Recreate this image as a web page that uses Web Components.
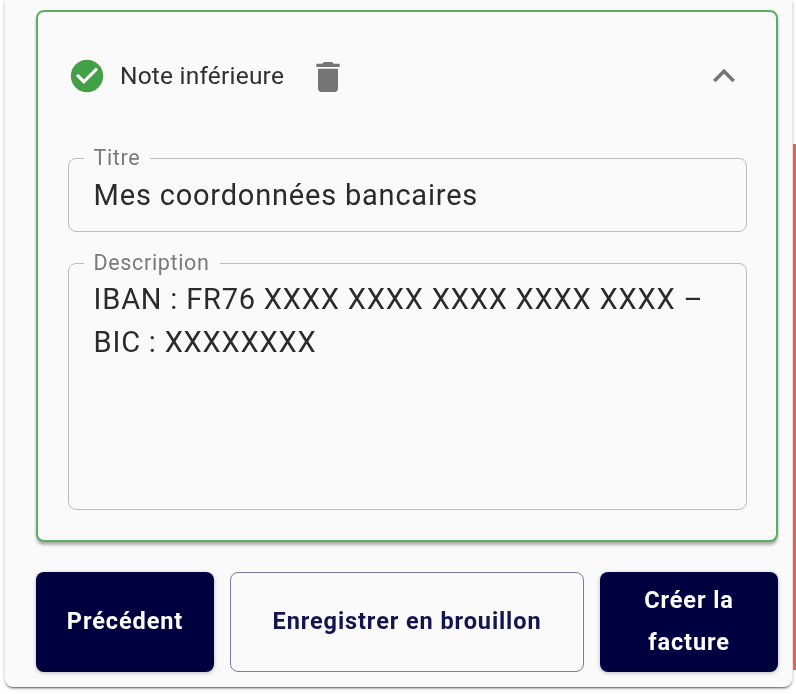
<!DOCTYPE html>
<html lang="fr"><head><meta charset="utf-8"><title>Note</title>
<style>
html,body{margin:0;padding:0;height:694px;overflow:hidden;background:#fff}
body{font-family:Roboto,"Liberation Sans",sans-serif;color:#262626}
</style></head><body>
<invoice-page>
  <note-card title-text="Note inférieure">
    <outlined-field label="Titre" style="--h:74px;--pt:16px">Mes coordonnées bancaires</outlined-field>
    <outlined-field label="Description" style="--h:247px;--pt:15px">IBAN : FR76 XXXX XXXX XXXX XXXX XXXX – BIC : XXXXXXXX</outlined-field>
  </note-card>
  <action-bar>
    <app-button variant="solid" style="width:178px">Précédent</app-button>
    <app-button variant="outline" style="width:354px">Enregistrer en brouillon</app-button>
    <app-button variant="solid" style="width:178px">Créer la facture</app-button>
  </action-bar>
</invoice-page>
<script>
function def(name,html){customElements.define(name,class extends HTMLElement{
  connectedCallback(){if(this.shadowRoot)return;const r=this.attachShadow({mode:'open'});r.innerHTML=typeof html==='function'?html(this):html;}
});}
def('invoice-page',`<style>
:host{display:block;box-sizing:border-box;width:796px;height:694px;position:relative;overflow:hidden;background:#fff;padding:0 0 7px 5px}
.paper{box-sizing:border-box;width:787px;height:687px;background:#fafafa;border-radius:0 0 8px 8px;padding:10px 14px 0 31px;
box-shadow:0 2px 2px -1px rgba(0,0,0,.55),0 1px 4px rgba(0,0,0,.22);display:flex;flex-direction:column;gap:30px;filter:blur(.35px)}
.red{position:absolute;right:0;top:144px;bottom:24px;width:3px;background:#e8604f}
</style><div class="paper"><slot></slot></div><div class="red"></div>`);
def('note-card',h=>`<style>
:host{display:block;flex:none;box-sizing:border-box;width:742px;height:532px;border:2px solid #5cae60;border-radius:8px;background:#fafafa;
box-shadow:0 3px 3px rgba(0,0,0,.3);padding:0 30px}
.head{display:flex;align-items:center;height:128px;margin-bottom:18px}
.check{width:38px;height:38px;flex:none}
.t{font-size:24.5px;letter-spacing:.2px;margin:-2px 0 0 14px;color:#303030}
.trash{width:40px;height:40px;margin:2px 0 0 23.5px;flex:none}
.chev{width:44px;height:44px;margin-left:auto;flex:none}
.body{display:flex;flex-direction:column;gap:31px}
</style>
<div class="head">
<svg class="check" viewBox="0 0 24 24"><circle cx="12" cy="12" r="10.2" fill="#43a047"/><path d="M10 17l-5-5 1.41-1.41L10 14.17l7.59-7.59L19 8z" fill="#fff"/></svg>
<span class="t">${h.getAttribute('title-text')}</span>
<svg class="trash" viewBox="0 0 24 24"><path fill="#757575" d="M6 19c0 1.1.9 2 2 2h8c1.1 0 2-.9 2-2V7H6v12zM19 4h-3.5l-1-1h-5l-1 1H5v2h14V4z"/></svg>
<svg class="chev" viewBox="0 0 24 24"><path fill="#757575" d="M7.41 15.41 12 10.83l4.59 4.58L18 14l-6-6-6 6z"/></svg>
</div>
<div class="body"><slot></slot></div>`);
def('outlined-field',h=>`<style>
:host{display:block;box-sizing:border-box;width:679px;height:var(--h);position:relative;font-size:29px;letter-spacing:.8px;line-height:43px;color:#2b2b2b}
fieldset{position:absolute;inset:-10px 0 0 0;margin:0;padding:0 14.5px;border:1.5px solid #bdbdbd;border-radius:8px;pointer-events:none}
legend{padding:0 10px;font-size:21.5px;letter-spacing:.65px;line-height:20px;height:20px;color:#7a7a7a;white-space:nowrap}
.v{padding:var(--pt) 26px 0 25.6px;position:relative}
</style><fieldset><legend>${h.getAttribute('label')}</legend></fieldset><div class="v"><slot></slot></div>`);
def('action-bar',`<style>:host{display:flex;flex:none;gap:16px;height:100px;width:742px}</style><slot></slot>`);
def('app-button',h=>{const s=h.getAttribute('variant')==='solid';return `<style>
:host{display:flex;flex:none;align-items:center;justify-content:center;box-sizing:border-box;height:100px;border-radius:8px;text-align:center;padding:0 30px 2px;
font-weight:700;font-size:23.5px;line-height:42px;letter-spacing:.9px;
${s?'background:#000040;color:#fff;box-shadow:0 1px 4px rgba(0,0,0,.25);':'background:transparent;color:#14144f;border:1.5px solid #7a7aa6;'}}
</style><slot></slot>`});
</script>
</body></html>
